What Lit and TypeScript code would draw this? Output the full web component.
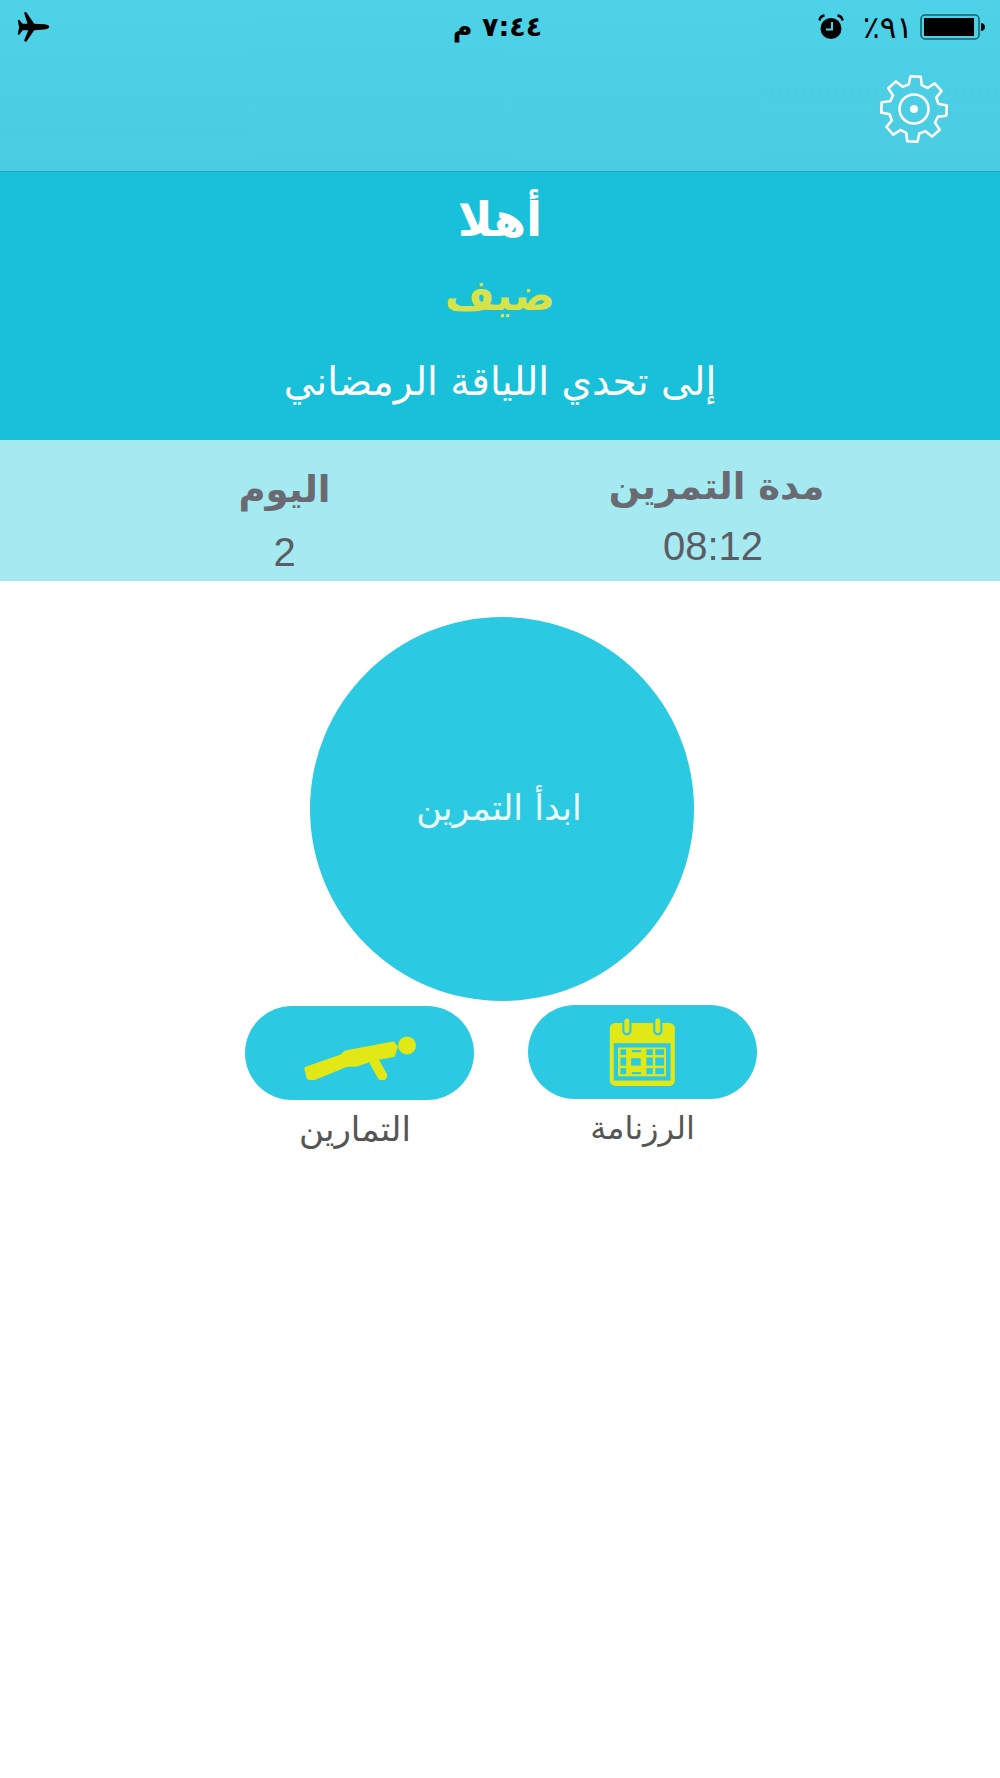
import { LitElement, html, css, svg } from 'lit';
import { customElement } from 'lit/decorators.js';

// eight wide teeth, turned a little clockwise like the reference
const gearPoints = () => {
  const cx = 40, cy = 40;
  const pts: string[] = [];
  const n = 8;
  for (let i = 0; i < n; i++) {
    const a = (i / n) * Math.PI * 2 - Math.PI / 2 + 0.05;
    const add = (r: number, t: number) => {
      const rad = a + (t * Math.PI) / 180;
      pts.push(`${(cx + r * Math.cos(rad)).toFixed(1)},${(cy + r * Math.sin(rad)).toFixed(1)}`);
    };
    add(25, -15);
    add(33, -9);
    add(33, 9);
    add(25, 15);
  }
  return pts.join(' ');
};

const calendarCells = [
  [52, 102, 16, 16], [84, 104, 26, 6], [125, 102, 18, 16], [150, 102, 25, 16],
  [52, 125, 16, 23], [82, 127, 27, 21], [125, 125, 18, 23], [150, 125, 25, 23],
  [52, 155, 16, 17], [84, 166, 26, 6], [125, 155, 18, 17], [150, 155, 25, 17],
];

@customElement('app-root')
export class AppRoot extends LitElement {
  static styles = css`
    :host {
      display: block;
      width: 1000px;
      height: 1778px;
      background: #fff;
      font-family: 'DejaVu Sans', sans-serif;
      overflow: hidden;
    }
    .top {
      height: 172px;
      box-sizing: border-box;
      border-bottom: 1px solid #2f9db2;
      background: linear-gradient(#4dd2e7, #4accE2);
      padding: 11px 15px 0 17px;
    }
    .status {
      display: grid;
      grid-template-columns: 1fr auto 1fr;
      align-items: center;
      height: 32px;
      color: #000;
    }
    .time {
      font-size: 27px;
      font-weight: bold;
      line-height: 32px;
      white-space: nowrap;
      margin-right: 7px;
    }
    .status-right {
      display: flex;
      align-items: center;
      justify-content: flex-end;
    }
    .batt-text {
      font-size: 31px;
      margin: 0 7px 0 19px;
      line-height: 32px;
    }
    .gear-row {
      display: flex;
      justify-content: flex-end;
      margin-top: 26px;
      margin-right: 31px;
    }
    .welcome {
      height: 268px;
      box-sizing: border-box;
      background: #18c0d9;
      display: flex;
      flex-direction: column;
      align-items: center;
      color: #fff;
      padding-top: 22px;
    }
    .hello {
      font-size: 47px;
      font-weight: bold;
      line-height: 52px;
    }
    .guest {
      font-size: 43px;
      font-weight: bold;
      line-height: 52px;
      margin-top: 23px;
      color: #d6e24a;
    }
    .sub {
      font-size: 39px;
      line-height: 50px;
      margin-top: 36px;
    }
    .stats {
      height: 141px;
      background: #a5e9f1;
      display: flex;
      color: #6a6a72;
    }
    .stat {
      display: flex;
      flex-direction: column;
      align-items: center;
    }
    .stat-title {
      font-size: 37px;
      font-weight: bold;
      line-height: 46px;
    }
    .stat-value {
      font-family: 'Liberation Sans', sans-serif;
      font-size: 40px;
      line-height: 46px;
      color: #5c5c64;
    }
    .stat-day {
      width: 569px;
      padding-top: 27px;
    }
    .stat-day .stat-value {
      margin-top: 16px;
    }
    .stat-time {
      width: 295px;
      padding-top: 24px;
    }
    .stat-time .stat-value {
      margin-top: 13px;
      margin-right: 7px;
    }
    .main {
      display: flex;
      flex-direction: column;
      align-items: center;
      padding-top: 36px;
    }
    .circle {
      width: 384px;
      height: 384px;
      border-radius: 50%;
      background: #2bcae2;
      color: #eafafc;
      font-size: 35px;
      display: flex;
      align-items: center;
      justify-content: center;
      margin-right: -4px;
      padding: 0 6px 2px 0;
      box-sizing: border-box;
    }
    .actions {
      display: flex;
      gap: 54px;
      margin-top: 4px;
      margin-left: 2px;
    }
    .action {
      display: flex;
      flex-direction: column;
      align-items: center;
      color: #555;
    }
    .action-plank {
      margin-top: 1px;
      font-size: 34px;
    }
    .action-plank .label {
      margin-right: 9px;
    }
    .action-calendar {
      font-size: 32px;
    }
    .pill {
      width: 229px;
      height: 94px;
      border-radius: 47px;
      background: #2bcae2;
      display: flex;
      align-items: center;
      justify-content: center;
      margin-bottom: 9px;
    }
    .label {
      line-height: 40px;
    }
    svg {
      display: block;
    }
  `;

  render() {
    return html`
      <div class="top">
        <div class="status">
          <svg width="33" height="32" viewBox="46 36 94 90">
            <path d="M138 80c0-4-8-7-16-7L95 72 72 38l-6 2 10 32H62L52 60l-4 2 4 20-4 20 4 2 10-14h16l-12 30 6 4 23-34 27-2c8 0 16-4 16-8z" fill="#000"></path>
          </svg>
          <div class="time">٧:٤٤ م</div>
          <div class="status-right">
            <svg width="26" height="26" viewBox="0 0 26 26">
              <circle cx="13" cy="14.500" r="10.500" fill="#000"></circle>
              <path d="M1.500 6.500Q2 2 6.500 1.500M24.500 6.500Q24 2 19.500 1.500" stroke="#000" stroke-width="2.500" fill="none"></path>
              <path d="M14 8v7.500H8" stroke="#4dd2e7" stroke-width="2" fill="none"></path>
            </svg>
            <div class="batt-text">٪٩١</div>
            <svg width="65" height="26" viewBox="0 0 65 26">
              <rect x="1" y="1" width="58" height="24" rx="4" fill="none" stroke="#1b5d6b" stroke-width="1.500"></rect>
              <rect x="4" y="4" width="50" height="18" fill="#000"></rect>
              <path d="M61 9c2.500 0 4 2 4 4s-1.500 4-4 4z" fill="#000"></path>
            </svg>
          </div>
        </div>
        <div class="gear-row">
          <svg width="80" height="80" viewBox="0 0 80 80">
            ${svg`<polygon points=${gearPoints()} fill="none" stroke="#fff" stroke-width="2.600" stroke-linejoin="round"></polygon>`}
            <circle cx="40" cy="40" r="14.500" fill="none" stroke="#fff" stroke-width="2.600"></circle>
            <circle cx="40" cy="40" r="4" fill="#fff"></circle>
          </svg>
        </div>
      </div>
      <div class="welcome">
        <div class="hello">أهلا</div>
        <div class="guest">ضيف</div>
        <div class="sub">إلى تحدي اللياقة الرمضاني</div>
      </div>
      <div class="stats">
        <div class="stat stat-day">
          <div class="stat-title">اليوم</div>
          <div class="stat-value">2</div>
        </div>
        <div class="stat stat-time">
          <div class="stat-title">مدة التمرين</div>
          <div class="stat-value">08:12</div>
        </div>
      </div>
      <div class="main">
        <div class="circle">ابدأ التمرين</div>
        <div class="actions">
          <div class="action action-plank">
            <div class="pill">
              <svg width="120" height="53" viewBox="208 109 360 160">
                <circle cx="530" cy="165" r="27" fill="#e2e815"></circle>
                <path d="M226 235L233 262 248 264 345 224 380 222 425 206 488 194 496 170 488 159 345 186 332 198z" fill="#e2e815" stroke="#e2e815" stroke-width="12" stroke-linejoin="round"></path>
                <path d="M432 215L455 256" stroke="#e2e815" stroke-width="30" stroke-linecap="round" fill="none"></path>
              </svg>
            </div>
            <div class="label">التمارين</div>
          </div>
          <div class="action action-calendar">
            <div class="pill">
              <svg width="81" height="79" viewBox="0 0 228 222">
                <rect x="22" y="28" width="183" height="177" rx="15" fill="#e2e815"></rect>
                <path d="M70 22V50M157 22V50" stroke="#2bcae2" stroke-width="26" stroke-linecap="round" fill="none"></path>
                <path d="M70 22V50M157 22V50" stroke="#e2e815" stroke-width="14" stroke-linecap="round" fill="none"></path>
                <rect x="33" y="85" width="160" height="105" fill="#2bcae2"></rect>
                <rect x="45" y="97" width="135" height="81" fill="#e2e815"></rect>
                ${calendarCells.map(
                  ([x, y, w, h]) => svg`<rect x=${x} y=${y} width=${w} height=${h} fill="#2bcae2"></rect>`
                )}
              </svg>
            </div>
            <div class="label">الرزنامة</div>
          </div>
        </div>
      </div>
    `;
  }
}
